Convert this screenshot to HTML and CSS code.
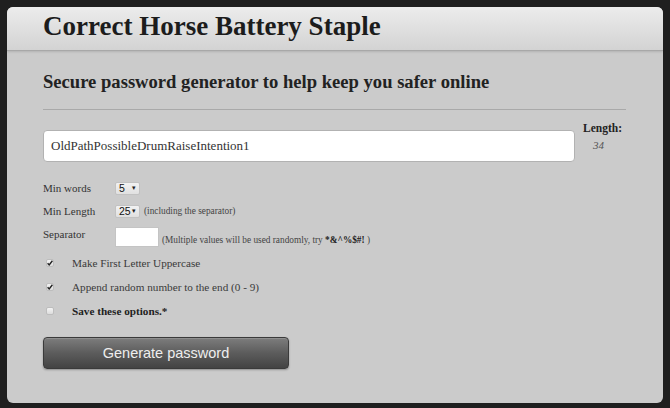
FILE: index.html
```html
<!DOCTYPE html>
<html lang="en">
<head>
<meta charset="utf-8">
<title>Correct Horse Battery Staple</title>
<link rel="stylesheet" href="styles.css">
</head>
<body>
<div class="panel">
  <header class="header">
    <h1 class="title">Correct Horse Battery Staple</h1>
  </header>
  <main class="content">
    <h2 class="subtitle">Secure password generator to help keep you safer online</h2>
    <hr class="rule">
    <div class="output-row">
      <input class="password" type="text" value="OldPathPossibleDrumRaiseIntention1">
      <div class="length">
        <div class="length-label">Length:</div>
        <div class="length-value">34</div>
      </div>
    </div>
    <div class="options">
      <div class="opt-row">
        <label class="opt-label">Min words</label>
        <span class="select"><span class="select-val">5</span><span class="arrow">&#9662;</span></span>
      </div>
      <div class="opt-row">
        <label class="opt-label">Min Length</label>
        <span class="select"><span class="select-val">25</span><span class="arrow">&#9662;</span></span>
        <span class="hint">(including the separator)</span>
      </div>
      <div class="opt-row sep-row">
        <label class="opt-label sep-label">Separator</label>
        <input class="sep-input" type="text" value="">
        <span class="hint">(Multiple values will be used randomly, try <b>*&amp;^%$#!</b> )</span>
      </div>
    </div>
    <div class="checks">
      <div class="check-row">
        <span class="cb"><svg viewBox="0 0 8 8" width="8" height="8"><path d="M1.6 4.2 L3.2 5.9 L6.4 1.8" fill="none" stroke="#222" stroke-width="1.4"/></svg></span>
        <span class="check-label">Make First Letter Uppercase</span>
      </div>
      <div class="check-row">
        <span class="cb"><svg viewBox="0 0 8 8" width="8" height="8"><path d="M1.6 4.2 L3.2 5.9 L6.4 1.8" fill="none" stroke="#222" stroke-width="1.4"/></svg></span>
        <span class="check-label">Append random number to the end (0 - 9)</span>
      </div>
      <div class="check-row">
        <span class="cb"></span>
        <span class="check-label strong">Save these options.*</span>
      </div>
    </div>
    <button class="generate" type="button">Generate password</button>
  </main>
</div>
</body>
</html>
```

FILE: styles.css
```css
html, body {
  margin: 0;
  padding: 0;
}
body {
  background: #1f1f1f;
  width: 670px;
  height: 408px;
  box-sizing: border-box;
  padding: 7px 7px 5px 7px;
  font-family: "Liberation Serif", "Times New Roman", serif;
  color: #333;
}
.panel {
  height: 396px;
  background: #cbcbcb;
  border-radius: 6px;
  overflow: hidden;
  display: flex;
  flex-direction: column;
}
.header {
  height: 43px;
  flex: none;
  background: linear-gradient(#ececec, #d3d3d3);
  box-shadow: 0 1px 0 #a8a8a8, 0 2px 2px rgba(0,0,0,0.12);
  padding-left: 36px;
  position: relative;
}
.title {
  margin: 0;
  font-size: 27px;
  line-height: 38px;
  font-weight: bold;
  color: #1c1c1c;
}
.content {
  padding: 0 37px 0 36px;
  display: flex;
  flex-direction: column;
}
.subtitle {
  margin: 21px 0 0 0;
  font-size: 18.6px;
  line-height: 22px;
  font-weight: bold;
  color: #222;
}
.rule {
  margin: 16px 0 0 0;
  border: 0;
  border-top: 1px solid #a9a9a9;
  height: 0;
}
.output-row {
  margin-top: 11px;
  display: flex;
  align-items: flex-start;
  gap: 8px;
}
.password {
  margin-top: 9px;
  flex: 1;
  height: 32px;
  box-sizing: border-box;
  border: 1px solid #b2b2b2;
  border-radius: 4px;
  background: #fff;
  padding: 0 7px;
  font-family: "Liberation Serif", "Times New Roman", serif;
  font-size: 13px;
  color: #333;
  outline: none;
}
.length {
  width: 43px;
  text-align: left;
}
.length-label {
  font-size: 11.5px;
  line-height: 14px;
  font-weight: bold;
  color: #222;
}
.length-value {
  margin-top: 3px;
  padding-left: 10px;
  font-size: 11px;
  line-height: 14px;
  font-style: italic;
  color: #555;
}
.options {
  margin-top: 18px;
  display: flex;
  flex-direction: column;
}
.opt-row {
  display: flex;
  align-items: center;
  height: 16px;
  margin-bottom: 7px;
}
.opt-row.sep-row {
  height: 20px;
  margin-top: 1px;
  margin-bottom: 0;
}
.opt-label {
  width: 72px;
  flex: none;
  font-size: 11px;
  line-height: 16px;
  color: #333;
}
.sep-label {
  margin-bottom: 6px;
}
.select {
  display: inline-flex;
  align-items: center;
  justify-content: space-between;
  box-sizing: border-box;
  width: 25px;
  height: 13px;
  padding: 0 3px 0 3px;
  background: linear-gradient(#f2f2f2, #e0e0e0);
  border: 1px solid #c2c2c2;
  border-radius: 2px;
  font-family: "Liberation Sans", Arial, sans-serif;
  font-size: 10.5px;
  color: #111;
}
.select-val {
  line-height: 12px;
}
.arrow {
  font-size: 7px;
  line-height: 12px;
  color: #222;
}
.hint {
  margin-left: 4px;
  font-size: 9.3px;
  line-height: 12px;
  color: #444;
  white-space: nowrap;
}
.hint b {
  color: #222;
}
.sep-row .hint {
  margin-left: 3px;
  margin-top: 5px;
}
.sep-input {
  width: 44px;
  height: 20px;
  box-sizing: border-box;
  border: 1px solid #c4c4c4;
  background: #fff;
  padding: 0 3px;
  margin: 0;
  outline: none;
}
.checks {
  margin-top: 4px;
  display: flex;
  flex-direction: column;
}
.check-row {
  display: flex;
  align-items: center;
  height: 24px;
}
.cb {
  flex: none;
  width: 8px;
  height: 8px;
  margin-left: 3px;
  margin-right: 18px;
  box-sizing: border-box;
  background: linear-gradient(#f4f4f4, #dcdcdc);
  border: 1px solid #bdbdbd;
  border-radius: 2px;
  display: flex;
  align-items: center;
  justify-content: center;
}
.cb svg {
  display: block;
  flex: none;
}
.check-label {
  font-size: 11.2px;
  line-height: 24px;
  color: #3a3a3a;
}
.check-label.strong {
  font-weight: bold;
  color: #222;
}
.generate {
  margin-top: 14px;
  width: 246px;
  height: 32px;
  border: 1px solid #3a3a3a;
  border-radius: 4px;
  background: linear-gradient(#7d7d7d, #5c5c5c 50%, #434343);
  box-shadow: 0 1px 2px rgba(0,0,0,0.3), inset 0 1px 0 rgba(255,255,255,0.15);
  color: #eeeeee;
  font-family: "Liberation Sans", Arial, sans-serif;
  font-size: 14.5px;
  padding: 0;
  cursor: pointer;
}
```
